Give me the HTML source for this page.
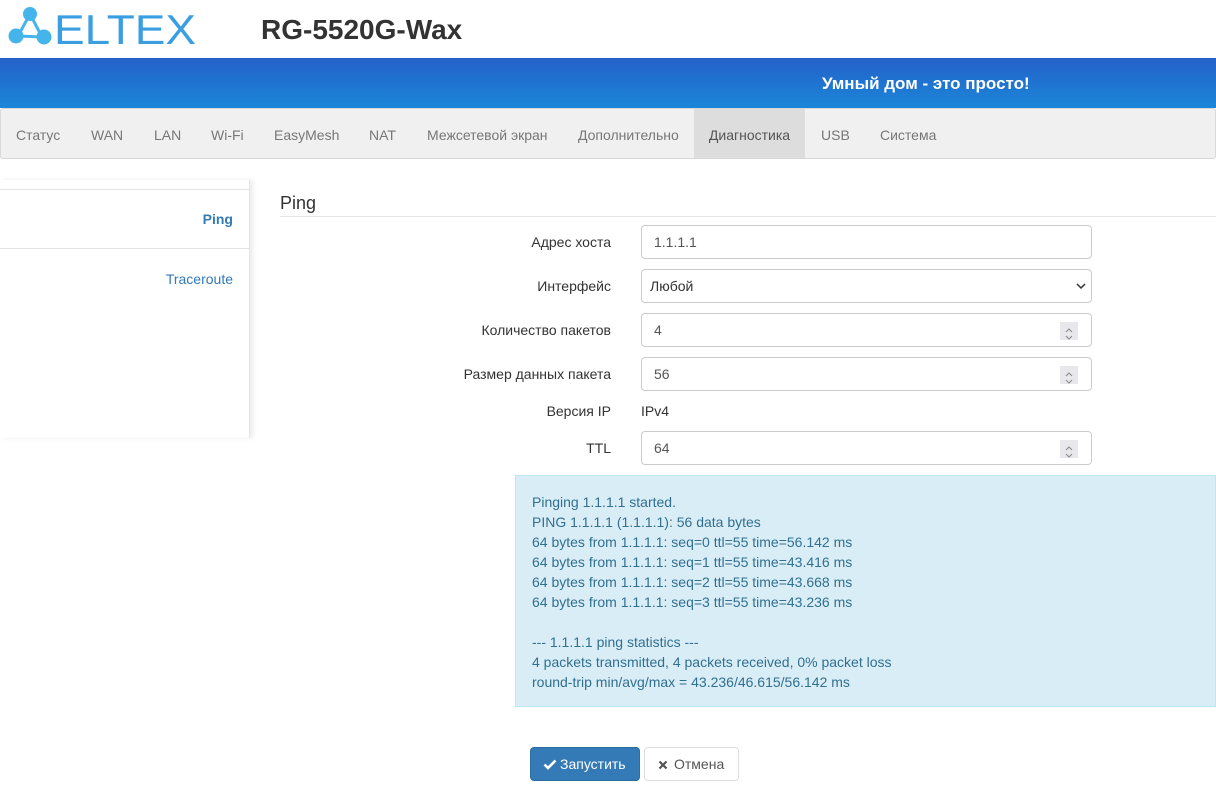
<!DOCTYPE html>
<html><head><meta charset="utf-8"><style>
*{box-sizing:border-box;margin:0;padding:0}
body{width:1216px;height:791px;overflow:hidden;background:#fff;font-family:"Liberation Sans",sans-serif;font-size:14px;color:#333;position:relative}
.abs{position:absolute}
.band{left:0;top:58px;width:1216px;height:50px;background:linear-gradient(180deg,#2461c9 0%,#1b86d8 100%)}
.nav{left:0;top:108px;width:1216px;height:51px;background:#f0f0f0;border:1px solid #d8d8d8;border-radius:3px}
.nav span{position:absolute;top:0;height:49px;line-height:52px;color:#777;font-size:14px}
.side{left:0;top:180px;width:250px;height:258px;border-right:1px solid #e5e5e5;box-shadow:3px 0 5px rgba(0,0,0,.08)}
.lbl{right:605px;font-size:14px;color:#333;text-align:right}
.inp{left:641px;width:451px;height:34px;border:1px solid #ccc;border-radius:4px;padding-left:12px;line-height:32px;color:#555;font-size:14px}
.spin{position:absolute;right:13px;top:8px;width:18px;height:18px;background:#e8e8ec}
.out{left:515px;top:475px;width:701px;height:232px;background:#d9edf7;border:1px solid #bce8f1;color:#31708f;padding:16px 16px;line-height:20px;font-size:14px}
</style></head><body>
<svg class="abs" style="left:0;top:0" width="210" height="52" viewBox="0 0 210 52">
<g fill="#45b4ea" stroke="#45b4ea">
<line x1="30" y1="14" x2="18" y2="36" stroke-width="3"/><line x1="30" y1="14" x2="42" y2="37" stroke-width="3"/><line x1="18" y1="36" x2="42" y2="37" stroke-width="3"/>
<circle cx="30" cy="14" r="6.5"/><circle cx="16" cy="36" r="7"/><circle cx="44" cy="37" r="7"/>
</g>
<text x="54" y="44" font-family="Liberation Sans" font-size="42" fill="#3a9ee0" textLength="142" lengthAdjust="spacingAndGlyphs">ELTEX</text>
</svg>
<div class="abs" style="left:261px;top:14px;font-size:28px;font-weight:bold;color:#333">RG-5520G-Wax</div>
<div class="abs band"></div>
<div class="abs" style="left:822px;top:74px;color:#fff;font-weight:bold;font-size:17px">Умный дом - это просто!</div>
<div class="abs nav">
<span style="left:15px">Статус</span><span style="left:90px">WAN</span><span style="left:153px">LAN</span><span style="left:210px">Wi-Fi</span><span style="left:273px">EasyMesh</span><span style="left:368px">NAT</span><span style="left:426px">Межсетевой экран</span><span style="left:577px">Дополнительно</span>
<span style="left:693px;width:111px;background:#ddd;color:#555;text-align:center">Диагностика</span>
<span style="left:820px">USB</span><span style="left:879px">Система</span>
</div>
<div class="abs side">
<div class="abs" style="left:0;top:9px;width:249px;border-top:1px solid #e3e3e3"></div>
<div class="abs" style="right:16px;top:31px;font-weight:bold;color:#337ab7">Ping</div>
<div class="abs" style="left:0;top:68px;width:249px;border-top:1px solid #e3e3e3"></div>
<div class="abs" style="right:16px;top:91px;color:#337ab7">Traceroute</div>
</div>
<div class="abs" style="left:280px;top:193px;font-size:18px;color:#333">Ping</div>
<div class="abs" style="left:280px;top:216px;width:936px;border-top:1px solid #e5e5e5"></div>
<div class="abs lbl" style="top:234px">Адрес хоста</div>
<div class="abs inp" style="top:225px">1.1.1.1</div>
<div class="abs lbl" style="top:278px">Интерфейс</div>
<div class="abs inp" style="top:269px;padding-left:8px;color:#333">Любой<svg style="position:absolute;right:5px;top:13px" width="10" height="7" viewBox="0 0 10 7"><path d="M1 1l4 4 4-4" fill="none" stroke="#333" stroke-width="1.5"/></svg></div>
<div class="abs lbl" style="top:322px">Количество пакетов</div>
<div class="abs inp" style="top:313px">4<span class="spin"><svg width="18" height="18" viewBox="0 0 18 18"><path d="M6 7l3-3 3 3M6 11l3 3 3-3" fill="none" stroke="#888" stroke-width="1"/></svg></span></div>
<div class="abs lbl" style="top:366px">Размер данных пакета</div>
<div class="abs inp" style="top:357px">56<span class="spin"><svg width="18" height="18" viewBox="0 0 18 18"><path d="M6 7l3-3 3 3M6 11l3 3 3-3" fill="none" stroke="#888" stroke-width="1"/></svg></span></div>
<div class="abs lbl" style="top:403px">Версия IP</div>
<div class="abs" style="left:641px;top:403px">IPv4</div>
<div class="abs lbl" style="top:440px">TTL</div>
<div class="abs inp" style="top:431px">64<span class="spin"><svg width="18" height="18" viewBox="0 0 18 18"><path d="M6 7l3-3 3 3M6 11l3 3 3-3" fill="none" stroke="#888" stroke-width="1"/></svg></span></div>
<div class="abs out">Pinging 1.1.1.1 started.<br>PING 1.1.1.1 (1.1.1.1): 56 data bytes<br>64 bytes from 1.1.1.1: seq=0 ttl=55 time=56.142 ms<br>64 bytes from 1.1.1.1: seq=1 ttl=55 time=43.416 ms<br>64 bytes from 1.1.1.1: seq=2 ttl=55 time=43.668 ms<br>64 bytes from 1.1.1.1: seq=3 ttl=55 time=43.236 ms<br><br>--- 1.1.1.1 ping statistics ---<br>4 packets transmitted, 4 packets received, 0% packet loss<br>round-trip min/avg/max = 43.236/46.615/56.142 ms</div>
<div class="abs" style="left:530px;top:747px;width:110px;height:34px;background:#337ab7;border:1px solid #2e6da4;border-radius:4px;color:#fff;line-height:32px;padding-left:12px"><svg width="14" height="11" viewBox="0 0 14 11" style="vertical-align:-1px;margin-right:3px"><path d="M1.5 5.5l3.5 3.5 7.5-7.5" fill="none" stroke="#fff" stroke-width="2.6"/></svg>Запустить</div>
<div class="abs" style="left:644px;top:747px;width:95px;height:34px;background:#fff;border:1px solid #ddd;border-radius:4px;color:#555;line-height:32px;padding-left:13px"><svg width="10" height="10" viewBox="0 0 10 10" style="vertical-align:-1px;margin-right:6px"><path d="M1.5 1.5l7 7M8.5 1.5l-7 7" stroke="#555" stroke-width="2.2"/></svg>Отмена</div>
</body></html>
